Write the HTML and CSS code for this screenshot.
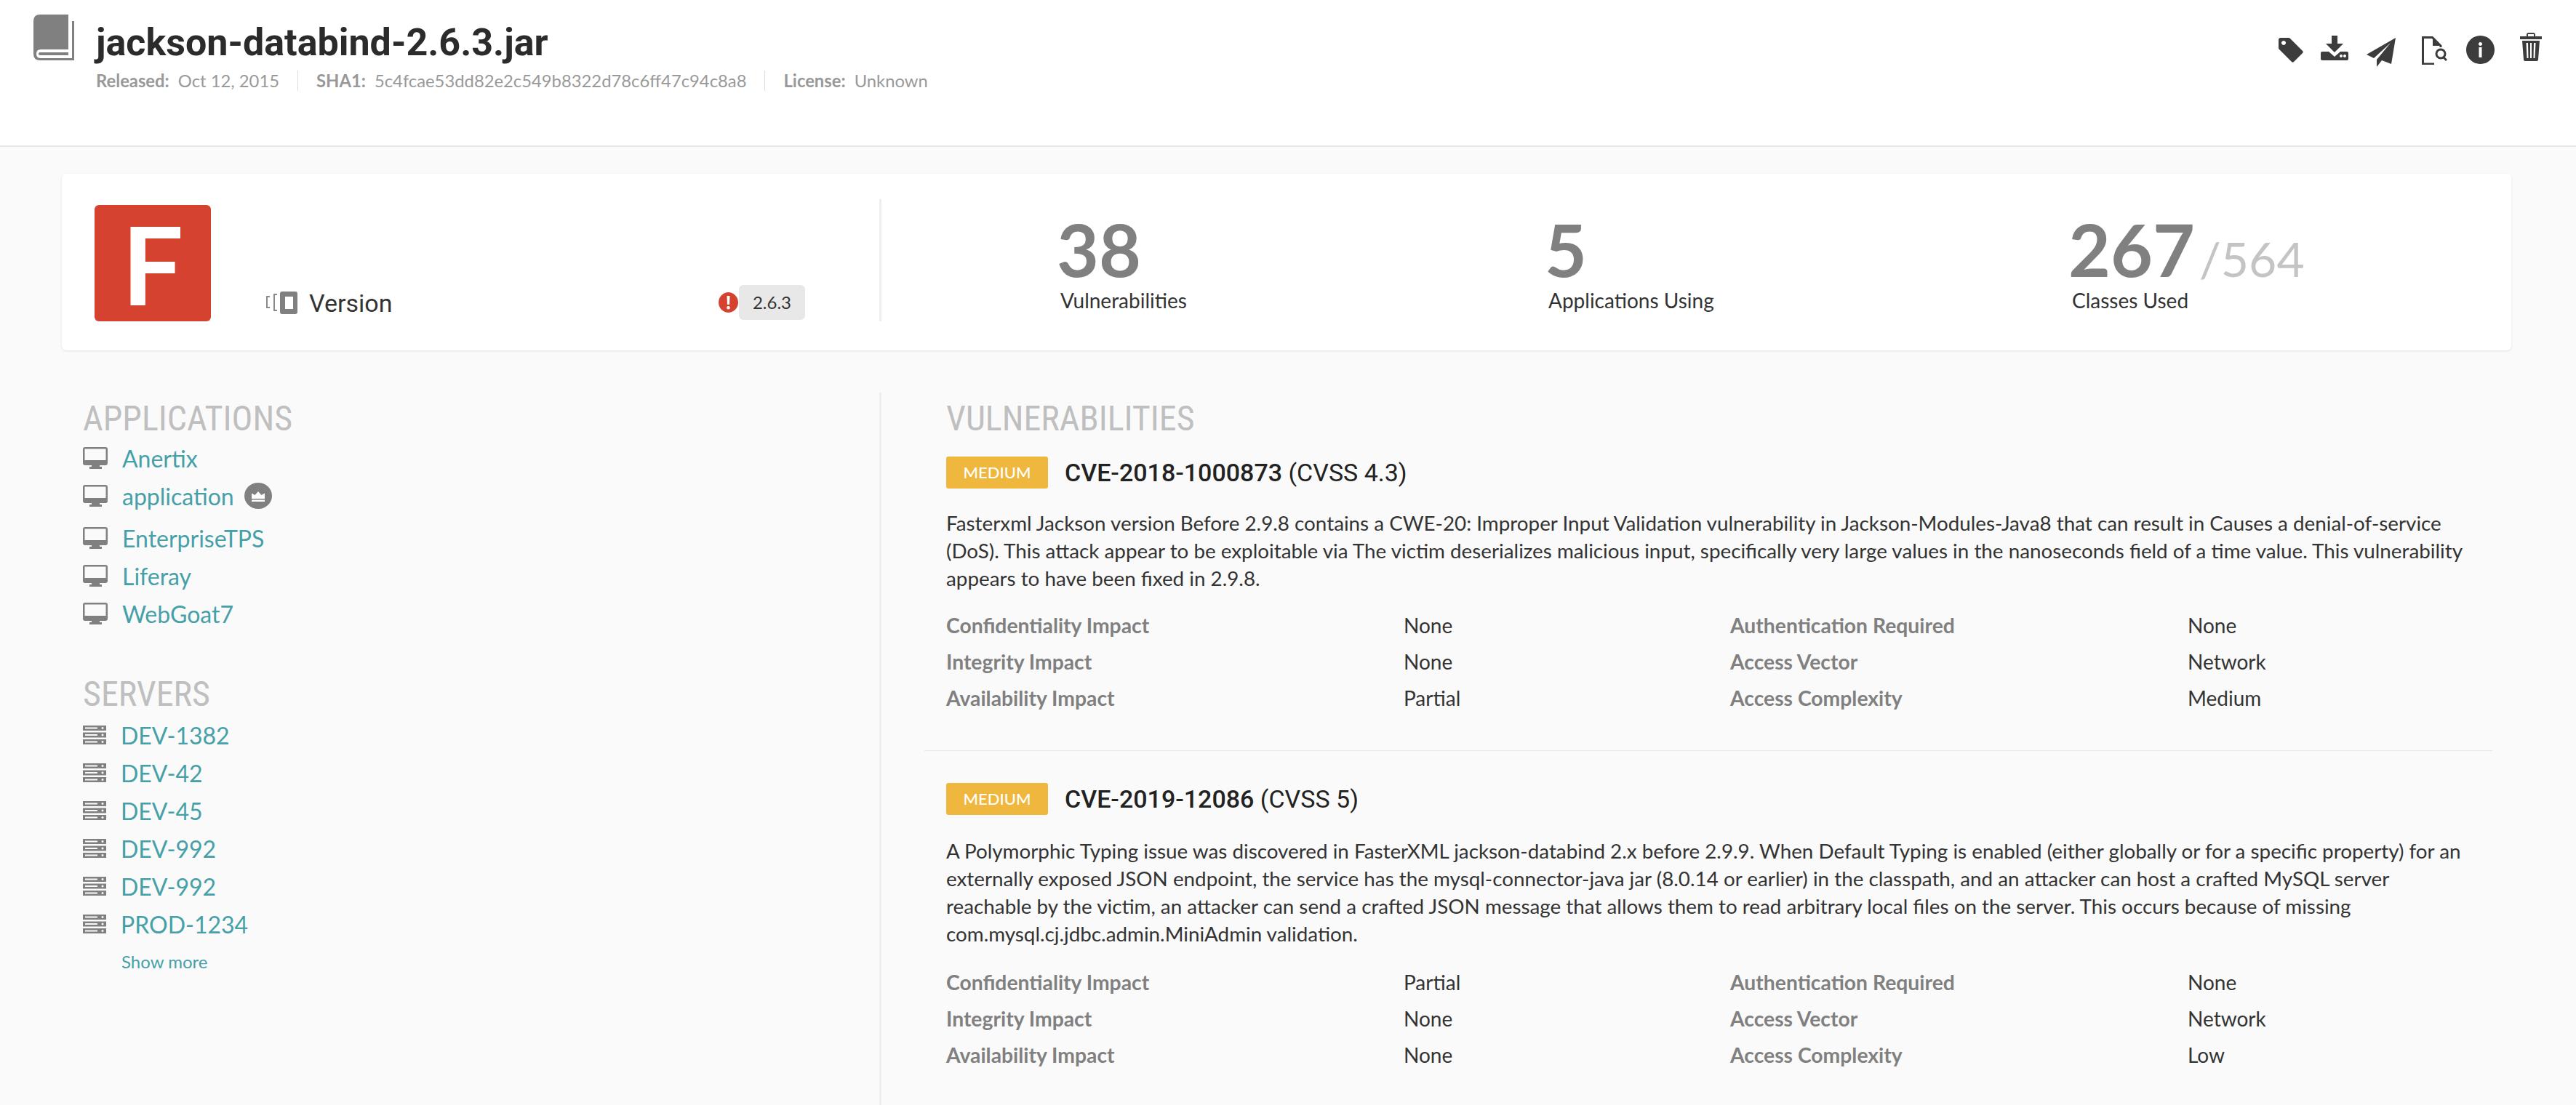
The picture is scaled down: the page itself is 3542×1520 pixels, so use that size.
FILE: index.html
```html
<!DOCTYPE html>
<html lang="en">
<head>
  <meta charset="UTF-8" />
  <title>jackson-databind-2.6.3.jar</title>
  <link rel="stylesheet" href="styles.css">
</head>
<body>

  <svg class="defs" width="0" height="0">
    <symbol id="monitor" viewBox="0 0 34 30">
      <path fill-rule="evenodd" d="M3 0h28q3 0 3 3v19q0 3-3 3h-8v2h3v3H9v-3h3v-2H3q-3 0-3-3V3q0-3 3-3zM2.500 2.500v15.500h29V2.500z"/>
    </symbol>
    <symbol id="server" viewBox="0 0 32 26">
      <path fill-rule="evenodd" d="M0 0h32v7H0zM3 2.500v2h17v-2zM27 2a1.500 1.500 0 1 0 .01 0zM0 9.500h32v7H0zM3 12v2h17v-2zM27 11.500a1.500 1.500 0 1 0 .01 0zM0 19h32v7H0zM3 21.500v2h17v-2zM27 21a1.500 1.500 0 1 0 .01 0z"/>
    </symbol>
  </svg>

  <header class="top-bar">
    <svg class="book-icon" width="56" height="63" viewBox="0 0 56 63">
      <path fill="#808080" d="M9 0H48V48H10Q4 48 4 54Q4 60 10 60H53V9H56V63H9Q0 63 0 54V9Q0 0 9 0Z"/>
      <path fill="#808080" d="M9 52H48V56H9Q7 56 7 54Q7 52 9 52Z"/>
    </svg>
    <div class="title-box">
      <h1>jackson-databind-2.6.3.jar</h1>
      <div class="meta">
        <span><b>Released:</b> Oct 12, 2015</span>
        <span><b>SHA1:</b> 5c4fcae53dd82e2c549b8322d78c6ff47c94c8a8</span>
        <span><b>License:</b> Unknown</span>
      </div>
    </div>
    <div class="actions">
      <svg class="act-tag" width="34" height="34" viewBox="0 0 34 34"><path fill-rule="evenodd" d="M3 0h11q1 0 2 1l17 17q1.500 1.500 0 3L21 33q-1.500 1.500-3 0L1 16q-1-1-1-2V3q0-3 3-3zM7 4a3 3 0 1 0 .01 0z"/></svg>
      <svg class="act-down" width="38" height="34" viewBox="0 0 38 34"><path d="M15 0h8v11h8L19 23 7 11h8z"/><path fill-rule="evenodd" d="M2 22h9l8 7 8-7h9q2 0 2 2v8q0 2-2 2H2q-2 0-2-2v-8q0-2 2-2zM28 26a2 2 0 1 0 .01 0zM33 26a2 2 0 1 0 .01 0z"/></svg>
      <svg class="act-send" width="40" height="40" viewBox="0 0 40 40"><path d="M40 0 0 23l10 5L33 7 14 30v10l7-9 13 5z"/></svg>
      <svg class="act-file" width="35" height="39" viewBox="0 0 35 39"><path d="M17 38H1.500V1.500h13L26 13v2" fill="none" stroke="#3c3c3c" stroke-width="3"/><path d="M15 1l11 12H15z"/><circle cx="26" cy="24" r="6" fill="none" stroke="#3c3c3c" stroke-width="3"/><path d="m30 29 4 4" stroke="#3c3c3c" stroke-width="3"/></svg>
      <svg class="act-info" width="39" height="39" viewBox="0 0 39 39"><path fill-rule="evenodd" d="M19.500 0a19.500 19.500 0 1 0 .01 0zM19.500 9a2.500 2.500 0 1 0 .01 0zM17.500 16v14h4V16z"/></svg>
      <svg class="act-trash" width="30" height="39" viewBox="0 0 30 39"><path fill-rule="evenodd" d="M9 5V3q0-3 3-3h6q3 0 3 3v2h9v4H0V5zM11 5h8V2h-8zM3 11h24l-2 26q0 2-2 2H7q-2 0-2-2zM8.500 14l1 21h2l-.5-21zM14 14v21h2V14zM19 14l-.5 21h2l1-21z"/></svg>
    </div>
  </header>

  <section class="summary">
    <div class="grade-box">
      <div class="grade">F</div>
      <div class="version-label">
        <svg width="43" height="31" viewBox="0 0 43 31"><path fill="none" stroke="#8a8a8a" stroke-width="2" d="M5 7H1v15h4M15 4h-4v22h4"/><path fill="#808080" fill-rule="evenodd" d="M22 0h18q3 0 3 3v25q0 3-3 3H22q-3 0-3-3V3q0-3 3-3zM26 7v17h11V7z"/></svg>
        <span>Version</span>
      </div>
      <div class="version-tag">
        <svg width="27" height="28" viewBox="0 0 27 28"><path fill="#d64230" fill-rule="evenodd" d="M13.500 0a13.500 14 0 1 0 .01 0zM11.500 5l.5 12h3l.5-12zM13.500 19a2.300 2.300 0 1 0 .01 0z"/></svg>
        <span class="tag">2.6.3</span>
      </div>
    </div>
    <div class="stats">
      <div class="stat stat-vuln"><div class="num">38</div><div class="cap">Vulnerabilities</div></div>
      <div class="stat stat-apps"><div class="num">5</div><div class="cap">Applications Using</div></div>
      <div class="stat stat-classes"><div class="num">267<small>/564</small></div><div class="cap">Classes Used</div></div>
    </div>
  </section>

  <main class="columns">
    <aside class="side">
      <h3>APPLICATIONS</h3>
      <ul class="list apps">
        <li><svg width="34" height="30"><use href="#monitor"/></svg><a>Anertix</a></li>
        <li class="tall"><svg width="34" height="30"><use href="#monitor"/></svg><a>application</a>
          <span class="crown"><svg width="18" height="15" viewBox="0 0 18 15"><path d="M0 3.500 4.500 6 9 1l4.500 5L18 3.500V11H0zM0 12.500h18V15H0z"/></svg></span></li>
        <li><svg width="34" height="30"><use href="#monitor"/></svg><a>EnterpriseTPS</a></li>
        <li><svg width="34" height="30"><use href="#monitor"/></svg><a>Liferay</a></li>
        <li><svg width="34" height="30"><use href="#monitor"/></svg><a>WebGoat7</a></li>
      </ul>
      <h3 class="servers-head">SERVERS</h3>
      <ul class="list servers">
        <li><svg width="32" height="26"><use href="#server"/></svg><a>DEV-1382</a></li>
        <li><svg width="32" height="26"><use href="#server"/></svg><a>DEV-42</a></li>
        <li><svg width="32" height="26"><use href="#server"/></svg><a>DEV-45</a></li>
        <li><svg width="32" height="26"><use href="#server"/></svg><a>DEV-992</a></li>
        <li><svg width="32" height="26"><use href="#server"/></svg><a>DEV-992</a></li>
        <li><svg width="32" height="26"><use href="#server"/></svg><a>PROD-1234</a></li>
      </ul>
      <a class="more">Show more</a>
    </aside>

    <section class="vulns">
      <h3>VULNERABILITIES</h3>

      <article class="cve">
        <div class="cve-head"><span class="sev">MEDIUM</span><h4><b>CVE-2018-1000873</b> (CVSS 4.3)</h4></div>
        <p>Fasterxml Jackson version Before 2.9.8 contains a CWE-20: Improper Input Validation vulnerability in Jackson-Modules-Java8 that can result in Causes a denial-of-service (DoS). This attack appear to be exploitable via The victim deserializes malicious input, specifically very large values in the nanoseconds field of a time value. This vulnerability appears to have been fixed in 2.9.8.</p>
        <div class="impact">
          <span class="k">Confidentiality Impact</span><span>None</span><span class="k">Authentication Required</span><span>None</span>
          <span class="k">Integrity Impact</span><span>None</span><span class="k">Access Vector</span><span>Network</span>
          <span class="k">Availability Impact</span><span>Partial</span><span class="k">Access Complexity</span><span>Medium</span>
        </div>
      </article>

      <article class="cve">
        <div class="cve-head"><span class="sev">MEDIUM</span><h4><b>CVE-2019-12086</b> (CVSS 5)</h4></div>
        <p>A Polymorphic Typing issue was discovered in FasterXML jackson-databind 2.x before 2.9.9. When Default Typing is enabled (either globally or for a specific property) for an externally exposed JSON endpoint, the service has the mysql-connector-java jar (8.0.14 or earlier) in the classpath, and an attacker can host a crafted MySQL server reachable by the victim, an attacker can send a crafted JSON message that allows them to read arbitrary local files on the server. This occurs because of missing com.mysql.cj.jdbc.admin.MiniAdmin validation.</p>
        <div class="impact">
          <span class="k">Confidentiality Impact</span><span>Partial</span><span class="k">Authentication Required</span><span>None</span>
          <span class="k">Integrity Impact</span><span>None</span><span class="k">Access Vector</span><span>Network</span>
          <span class="k">Availability Impact</span><span>None</span><span class="k">Access Complexity</span><span>Low</span>
        </div>
      </article>
    </section>
  </main>

</body>
</html>
```

FILE: styles.css
```css
* {
  box-sizing: border-box;
}
html, body {
  height: 1520px;
  overflow: hidden;
}
body {
  margin: 0;
  font-family: 'Lato', sans-serif;
  background-color: #fafafa;
  color: #333;
}
.defs {
  display: block;
  height: 0;
}
.top-bar {
  display: flex;
  height: 202px;
  padding: 20px 47px 0 46px;
  background-color: #fff;
  border-bottom: 2px solid #e8e8e8;
}
.book-icon {
  flex: none;
}
.title-box {
  margin-left: 30px;
}
h1 {
  margin: 8px 0 0;
  font-family: 'Roboto', sans-serif;
  font-size: 52px;
  line-height: 62px;
  font-weight: 700;
  color: #2b2b2b;
}
.meta {
  display: flex;
  margin-top: 7px;
  font-size: 23.8px;
  line-height: 28px;
  color: #999;
}
.meta span {
  padding-right: 25px;
  margin-right: 25px;
  border-right: 1px solid #ddd;
}
.meta span:last-child {
  border-right: none;
}
.meta b {
  margin-right: 6px;
}
.actions {
  display: flex;
  align-items: flex-start;
  margin-left: auto;
}
.actions svg {
  fill: #3c3c3c;
}
.act-tag {
  margin-top: 32px;
}
.act-down {
  margin-top: 29px;
  margin-left: 24px;
}
.act-send {
  margin-top: 32px;
  margin-left: 25px;
}
.act-file {
  margin-top: 30px;
  margin-left: 36px;
}
.act-info {
  margin-top: 29px;
  margin-left: 26px;
}
.act-trash {
  margin-top: 25px;
  margin-left: 35px;
}
.summary {
  display: flex;
  height: 243px;
  margin: 37px 89px 0 85px;
  background-color: #fff;
  border-radius: 6px;
  box-shadow: 0 1px 3px rgba(0, 0, 0, 0.1);
}
.grade-box {
  display: flex;
  align-items: flex-end;
  width: 1079px;
  height: 160px;
  margin-top: 43px;
  margin-left: 45px;
}
.grade {
  width: 160px;
  height: 160px;
  margin-right: 76px;
  background-color: #d64230;
  border-radius: 6px;
  color: #fff;
  font-size: 150px;
  line-height: 160px;
  font-weight: 700;
  text-align: center;
}
.version-label {
  display: flex;
  align-items: center;
  gap: 16px;
  height: 31px;
  margin-bottom: 10px;
  font-family: 'Roboto', sans-serif;
  font-size: 34px;
  font-weight: 400;
  color: #333;
}
.version-tag {
  display: flex;
  align-items: center;
  margin-left: auto;
  margin-right: 102px;
  margin-bottom: 2px;
}
.tag {
  width: 91px;
  height: 48px;
  margin-left: 1px;
  background-color: #e8e8e8;
  border-radius: 6px;
  font-size: 24px;
  line-height: 48px;
  text-align: center;
}
.stats {
  flex: 1;
  display: flex;
  height: 168px;
  margin-top: 35px;
  border-left: 3px solid #eee;
}
.stat {
  padding-top: 22px;
}
.stat .num {
  height: 100px;
  font-size: 100px;
  line-height: 92px;
  font-weight: 700;
  color: #808080;
}
.stat small {
  margin-left: 6px;
  font-size: 66px;
  line-height: 0;
  font-weight: 400;
  color: #c4c4c4;
}
.stat .cap {
  margin-left: 5px;
  font-size: 28px;
  line-height: 34px;
  color: #333;
}
.stat-vuln {
  margin-left: 241px;
  width: 671px;
}
.stat-apps {
  width: 720px;
}
.columns {
  display: grid;
  grid-template-columns: 1124px 1fr;
  margin-top: 58px;
  margin-left: 85px;
  height: 1000px;
}
h3 {
  margin: 0;
  font-family: 'Roboto', sans-serif;
  font-stretch: condensed;
  font-size: 48px;
  line-height: 56px;
  font-weight: 400;
  color: #bfbfbf;
}
.side {
  padding-left: 29px;
  padding-top: 8px;
}
.list {
  margin: 0;
  padding: 0;
  list-style: none;
}
.list li {
  display: flex;
  align-items: center;
  height: 52px;
  font-size: 32px;
}
.list a, .more {
  color: #46a0a8;
}
.list svg {
  fill: #808080;
  flex: none;
}
.list li > svg {
  margin-right: 20px;
}
.apps li.tall {
  height: 58px;
  padding-bottom: 6px;
}
.crown {
  display: flex;
  align-items: center;
  justify-content: center;
  width: 38px;
  height: 36px;
  margin-left: 14px;
  background-color: #808080;
  border-radius: 50%;
}
.crown svg {
  fill: #fff;
}
.servers-head {
  margin-top: 57px;
}
.servers {
  margin-top: 2px;
}
.more {
  display: block;
  margin-top: 11px;
  margin-left: 53px;
  font-size: 24px;
}
.vulns {
  padding-left: 89px;
  padding-top: 8px;
  padding-right: 115px;
  border-left: 3px solid #eee;
}
.cve {
  padding: 0 0 47px 30px;
  margin-left: -30px;
  border-bottom: 1px solid #e8e8e8;
  margin-top: 24px;
}
.cve:last-child {
  border-bottom: none;
  margin-top: 44px;
}
.cve-head {
  display: flex;
  align-items: center;
  gap: 23px;
}
.sev {
  width: 140px;
  height: 44px;
  background-color: #efb73e;
  border-radius: 3px;
  color: #fff;
  font-size: 22px;
  line-height: 44px;
  font-weight: 500;
  text-align: center;
}
h4 {
  margin: 0;
  font-family: 'Roboto', sans-serif;
  font-size: 34px;
  font-weight: 400;
  color: #222;
}
h4 b {
  font-weight: 500;
}
.cve p {
  max-width: 2100px;
  margin: 29px 0 0;
  font-size: 27.8px;
  line-height: 38px;
  color: #333;
}
.cve:last-child p {
  margin-top: 31px;
}
.impact {
  display: grid;
  grid-template-columns: 629px 449px 629px 1fr;
  margin-top: 20px;
  font-size: 28px;
  line-height: 50px;
}
.cve:last-child .impact {
  margin-top: 22px;
}
.k {
  color: #808080;
  font-size: 28.3px;
  font-weight: 700;
}
```
